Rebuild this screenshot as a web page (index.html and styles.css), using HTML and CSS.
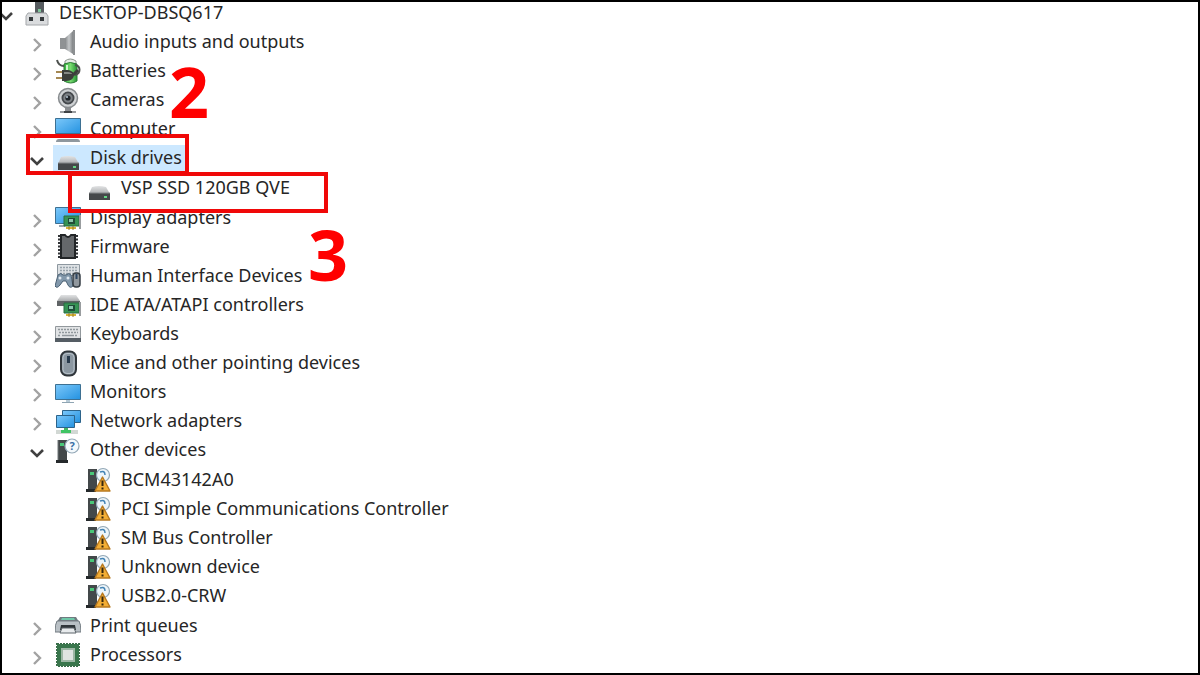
FILE: index.html
```html
<!DOCTYPE html>
<html lang="en">
<head>
  <meta charset="UTF-8" />
  <meta name="viewport" content="width=device-width, initial-scale=1.0"/>
  <title>Device Manager</title>
  <link rel="stylesheet" href="styles.css">
</head>
<body>
  <!-- Icon set -->
  <svg class="sprite" aria-hidden="true">
    <defs>
      <linearGradient id="blue" x1="0" y1="0" x2="1" y2="1">
        <stop offset="0" stop-color="#7cc8fa"/><stop offset="1" stop-color="#2492e0"/>
      </linearGradient>
      <linearGradient id="metal" x1="0" y1="0" x2="1" y2="0">
        <stop offset="0" stop-color="#85888a"/><stop offset=".5" stop-color="#c4c7c9"/><stop offset="1" stop-color="#808385"/>
      </linearGradient>
      <linearGradient id="lid" x1="0" y1="0" x2="0" y2="1">
        <stop offset="0" stop-color="#e2e3e4"/><stop offset="1" stop-color="#a9abad"/>
      </linearGradient>
      <linearGradient id="green" x1="0" y1="0" x2="1" y2="0">
        <stop offset="0" stop-color="#2fae3c"/><stop offset=".5" stop-color="#79dc70"/><stop offset="1" stop-color="#249435"/>
      </linearGradient>
    </defs>

    <symbol id="chevron-right" viewBox="0 0 16 16">
      <path d="M5 2l6 6-6 6" fill="none" stroke="#a2a2a2" stroke-width="2.4"/>
    </symbol>
    <symbol id="chevron-down" viewBox="0 0 16 16">
      <path d="M2 5l6 6 6-6" fill="none" stroke="#404040" stroke-width="2.6"/>
    </symbol>

    <symbol id="root" viewBox="0 0 26 27">
      <path d="M11 0h9v14h-9z" fill="#565b5f"/>
      <path d="M14 9h3v3h-3z" fill="#7fc49a"/>
      <path d="M4 13h18l2 3v9H2v-9z" fill="#dadcde" stroke="#a4a7aa"/>
      <path d="M5 17h4v4H5zM16 17h4v4h-4z" fill="#35393c"/>
    </symbol>

    <symbol id="audio" viewBox="0 0 26 27">
      <path d="M5 9h5v11H5z" fill="#8f9294"/>
      <path d="M10 9l8-7v23l-8-5z" fill="url(#metal)"/>
      <path d="M18 1h2v25h-2z" fill="#8c8f91"/>
    </symbol>

    <symbol id="battery" viewBox="0 0 26 27">
      <path d="M10 3q5-4 11 0v3H10z" fill="#e6ebe6" stroke="#8d958e"/>
      <path d="M9 6q6-3 13 0v17q-6 4-13 0z" fill="url(#green)" stroke="#2c7b35"/>
      <path d="M12 7v8" stroke="#d1f5cc" stroke-width="2"/>
      <path d="M2 2c1 4 4 6 7 6M20 7c6 1 6 8 0 10" fill="none" stroke="#4d514e" stroke-width="2"/>
      <path d="M1 14h7M1 20h7" stroke="#a58853" stroke-width="2"/>
      <path d="M7 12h4c5 0 8 2 8 5s-3 6-8 6H7z" fill="#3c3f3c"/>
      <path d="M9 14h4c2 0 4 1 4 2H9z" fill="#858985"/>
      <path d="M18 17l5-5" stroke="#3c3f3c" stroke-width="3"/>
    </symbol>

    <symbol id="camera" viewBox="0 0 26 27">
      <path d="M10 20h6v4h-6z" fill="#8c8f92"/>
      <path d="M5 25h16" stroke="#9a9da0" stroke-width="2"/>
      <path d="M9 25h8" stroke="#3f4346" stroke-width="2"/>
      <circle cx="13" cy="11" r="9.5" fill="#cfd2d4" stroke="#878b8e" stroke-width="1.5"/>
      <circle cx="13" cy="11" r="5.6" fill="#7d8286" stroke="#44484c" stroke-width="1.8"/>
      <circle cx="13" cy="11" r="2.6" fill="#20252a"/>
      <circle cx="12" cy="10" r="1" fill="#b9cbd8"/>
    </symbol>

    <symbol id="computer" viewBox="0 0 26 27">
      <path d="M.5 2.500h25v15H.5z" fill="url(#blue)" stroke="#3d7092"/>
      <path d="M1 26q0-3 3-3h18q3 0 3 3z" fill="#8f989f"/>
    </symbol>

    <symbol id="monitor" viewBox="0 0 26 27">
      <path d="M.5 5.500h25v15H.5z" fill="url(#blue)" stroke="#3d7092"/>
      <path d="M11 21h4v2h-4z" fill="#b8cbd7"/>
      <path d="M7 23.500h12" stroke="#8fa5b3"/>
    </symbol>

    <symbol id="disk" viewBox="0 0 26 27">
      <path d="M6 12q7-2 14 0l4 7H3z" fill="url(#lid)"/>
      <path d="M3 18h21v7H3z" fill="#45484a"/>
      <path d="M3 18h21" stroke="#85888a"/>
      <path d="M18 21h3v2h-3z" fill="#64d684"/>
    </symbol>

    <symbol id="card" viewBox="0 0 18 15">
      <path d="M1 1h15v10H1z" fill="#369454" stroke="#286c40"/>
      <path d="M5 3h7v6H5z" fill="#1f4d38"/>
      <path d="M6 4h4v3H6z" fill="#8cc6ae"/>
      <path d="M3 12h10v2H3z" fill="#d8b438"/>
      <path d="M6 11v4M10 11v4" stroke="#967a24"/>
      <path d="M17 0v14" stroke="#999d9f" stroke-width="2"/>
    </symbol>

    <symbol id="display" viewBox="0 0 26 27">
      <path d="M.5 2.500h25v16H.5z" fill="url(#blue)" stroke="#3d7092"/>
      <path d="M4 21h6" stroke="#9aa6ae" stroke-width="2"/>
      <use href="#card" x="8" y="10" width="18" height="15"/>
    </symbol>

    <symbol id="firmware" viewBox="0 0 26 27">
      <path d="M5 1v24M21 1v24" stroke="#303336" stroke-width="4" stroke-dasharray="2 1.500"/>
      <path d="M6 1h4q3 4 6 0h4v23H6z" fill="#65686b" stroke="#222527" stroke-width="2"/>
    </symbol>

    <symbol id="hid" viewBox="0 0 26 27">
      <path d="M2.500 1.500h22v11h-22z" fill="#dde1e4" stroke="#8d979f"/>
      <path d="M5 4.500h18M5 7.500h18M5 10.500h18" stroke="#98a3ab" stroke-width="1.500" stroke-dasharray="2 1"/>
      <path d="M3 12q3-3 5 0h3q3-3 5 0l2 11q-3 3-5-1l-2-4H8l-3 4q-3 4-5 1z" fill="#8298ab" stroke="#4a6073"/>
      <circle cx="5" cy="15" r="1.500" fill="#dfe8ef"/>
      <circle cx="13" cy="15" r="1.500" fill="#dfe8ef"/>
      <rect x="18" y="10" width="7" height="14" rx="3" fill="#91989e" stroke="#363e45" stroke-width="1.500"/>
      <path d="M21.500 11v5" stroke="#2e4864" stroke-width="2"/>
    </symbol>

    <symbol id="ide" viewBox="0 0 26 27">
      <path d="M6 3h15l4 6H2z" fill="url(#lid)"/>
      <path d="M2 9h23v5H2z" fill="#5f6365"/>
      <use href="#card" x="8" y="10" width="18" height="15"/>
    </symbol>

    <symbol id="keyboard" viewBox="0 0 26 27">
      <path d="M.5 5.500h25v13H.5z" fill="#e1e3e5" stroke="#92989c"/>
      <path d="M3 8.500h20M4 11.500h19M3 14.500h3M20 14.500h3" stroke="#90979c" stroke-width="1.500" stroke-dasharray="2 1"/>
      <path d="M7 14.500h12" stroke="#90979c" stroke-width="1.500"/>
      <path d="M0 17h26v4H0z" fill="#555d64"/>
    </symbol>

    <symbol id="mouse" viewBox="0 0 26 27">
      <rect x="6" y="1.500" width="15" height="24" rx="6" fill="#8b97a1" stroke="#30363b" stroke-width="2"/>
      <rect x="8" y="3.500" width="11" height="20" rx="4" fill="none" stroke="#b6c0c8"/>
      <path d="M13.500 6v7" stroke="#27394b" stroke-width="3"/>
    </symbol>

    <symbol id="network" viewBox="0 0 26 27">
      <path d="M7.500 2.500h18v12h-18z" fill="url(#blue)" stroke="#2c638a"/>
      <path d="M1.500 7.500h18v12h-18z" fill="url(#blue)" stroke="#2c638a"/>
      <path d="M9 20h4v2h-4z" fill="#45b665"/>
      <path d="M1 22h22v4H1z" fill="#d2d8d4"/>
      <path d="M6 22h10v3H6z" fill="#3fc464"/>
    </symbol>

    <symbol id="other" viewBox="0 0 26 27">
      <path d="M3 3h9v20H3z" fill="#43484a"/>
      <path d="M1 23h12v3H1z" fill="#25292b"/>
      <path d="M3 3v20" stroke="#707678"/>
      <path d="M5 6h4v3H5z" fill="#49c779"/>
      <circle cx="17" cy="9" r="7" fill="#f4f9fc" stroke="#93a8b7" stroke-width="1.200"/>
    </symbol>

    <symbol id="warning" viewBox="0 0 26 27">
      <path d="M2 2h9v20H2z" fill="#43484a"/>
      <path d="M0 22h10v3H0z" fill="#25292b"/>
      <path d="M4 5h4v3H4z" fill="#49c779"/>
      <circle cx="17" cy="8" r="6.500" fill="#edf5fa" stroke="#93a8b7" stroke-width="1.200"/>
      <path d="M14 5q5-2 5 3" fill="none" stroke="#4484b5" stroke-width="1.500"/>
      <path d="M16.500 10l7.500 14H9z" fill="#f3ae35" stroke="#b87920" stroke-linejoin="round" stroke-width="1.400"/>
      <path d="M16.500 13.500v5.500M16.500 20.500v2" stroke="#35250c" stroke-width="2"/>
    </symbol>

    <symbol id="printer" viewBox="0 0 26 27">
      <path d="M5 4h16l3 5H2z" fill="#707a80"/>
      <path d="M7 5h12l1 2H6z" fill="#6fc8a8"/>
      <path d="M2 8h22q2 3 2 11H0Q0 11 2 8z" fill="#b9c0c5" stroke="#727b81"/>
      <path d="M6 12h14l1 5H5z" fill="#30363a"/>
      <path d="M7 15h12l2 5H5z" fill="#e8ebed" stroke="#5d656a"/>
    </symbol>

    <symbol id="processor" viewBox="0 0 26 27">
      <rect x="2" y="2" width="22" height="22" fill="none" stroke="#3b6d4a" stroke-width="2" stroke-dasharray="2 1"/>
      <path d="M2 2h22v22H2z" fill="#39764c"/>
      <path d="M7 7h12v12H7z" fill="#dfe4e1" stroke="#9db7a5" stroke-width="2"/>
    </symbol>
  </svg>

  <main class="window">
    <ul class="tree" id="tree"></ul>
  </main>

  <script>
    const devices = [
      { name: "DESKTOP-DBSQ617", icon: "root", children: [
        { name: "Audio inputs and outputs", icon: "audio", closed: true },
        { name: "Batteries", icon: "battery", closed: true },
        { name: "Cameras", icon: "camera", closed: true },
        { name: "Computer", icon: "computer", closed: true },
        { name: "Disk drives", icon: "disk", selected: true, step: 2, children: [
          { name: "VSP SSD 120GB QVE", icon: "disk", step: 3 }
        ] },
        { name: "Display adapters", icon: "display", closed: true },
        { name: "Firmware", icon: "firmware", closed: true },
        { name: "Human Interface Devices", icon: "hid", closed: true },
        { name: "IDE ATA/ATAPI controllers", icon: "ide", closed: true },
        { name: "Keyboards", icon: "keyboard", closed: true },
        { name: "Mice and other pointing devices", icon: "mouse", closed: true },
        { name: "Monitors", icon: "monitor", closed: true },
        { name: "Network adapters", icon: "network", closed: true },
        { name: "Other devices", icon: "other", mark: "?", children: [
          { name: "BCM43142A0", icon: "warning" },
          { name: "PCI Simple Communications Controller", icon: "warning" },
          { name: "SM Bus Controller", icon: "warning" },
          { name: "Unknown device", icon: "warning" },
          { name: "USB2.0-CRW", icon: "warning" }
        ] },
        { name: "Print queues", icon: "printer", closed: true },
        { name: "Processors", icon: "processor", closed: true }
      ] }
    ];

    function renderToggle(device) {
      if (!device.children && !device.closed) {
        return `<span class="toggle"></span>`;
      }
      const chevron = device.children ? "chevron-down" : "chevron-right";
      return `<button class="toggle" type="button" aria-label="${device.name}" aria-expanded="${!device.closed}">
        <svg><use href="#${chevron}"/></svg>
      </button>`;
    }

    function renderDevice(device) {
      const mark = device.mark ? `<text x="17" y="13" class="mark">${device.mark}</text>` : "";
      const step = device.step
        ? `<span class="frame frame-${device.step}"></span><b class="step step-${device.step}">${device.step}</b>`
        : "";
      const children = device.children
        ? `<ul class="branch">${device.children.map(renderDevice).join("")}</ul>`
        : "";
      return `<li>
        <div class="row">
          ${renderToggle(device)}
          <span class="node${device.selected ? " selected" : ""}">
            <svg class="icon"><use href="#${device.icon}"/>${mark}</svg>
            <span class="name">${device.name}</span>
          </span>
          ${step}
        </div>
        ${children}
      </li>`;
    }

    document.getElementById("tree").innerHTML = devices.map(renderDevice).join("");
  </script>
</body>
</html>
```
FILE: styles.css
```css
* {
  box-sizing: border-box;
}

body {
  margin: 0;
  font-family: "Noto Sans", "Open Sans", sans-serif;
  font-size: 18px;
  color: #262626;
  background-color: #fff;
}

.window {
  min-height: 100vh;
  border: 2px solid #000;
  overflow: hidden;
}

.sprite {
  position: absolute;
  width: 0;
  height: 0;
}

/* Tree */
.tree,
.branch {
  margin: 0;
  padding: 0;
  list-style: none;
}

.tree {
  margin: -3px 0 0 -4px;
}

.branch {
  padding-left: 31px;
}

.branch .branch {
  padding-top: 1px;
  padding-bottom: 1px;
}

.row {
  position: relative;
  display: flex;
  align-items: center;
  height: 29px;
  white-space: nowrap;
}

.toggle {
  width: 16px;
  height: 16px;
  margin: 4px 8px 0 0;
  padding: 0;
  border: none;
  background: none;
  cursor: pointer;
}

.toggle svg {
  display: block;
  width: 16px;
  height: 16px;
}

.node {
  display: flex;
  align-items: center;
  gap: 9px;
  height: 28px;
  padding: 0 6px 0 2px;
}

.selected {
  background-color: #cce8ff;
}

.icon {
  width: 26px;
  height: 27px;
}

.name {
  padding-bottom: 3px;
  line-height: 24px;
}

.mark {
  font-size: 11px;
  font-weight: bold;
  text-anchor: middle;
  fill: #3a6fa5;
}

/* Step annotations */
.frame {
  position: absolute;
  z-index: 1;
  height: 41px;
  border: 4px solid #f00808;
}

.frame-2 {
  top: -10px;
  left: -3px;
  width: 163px;
}

.frame-3 {
  top: -2px;
  left: 8px;
  width: 260px;
}

.step {
  position: absolute;
  z-index: 1;
  font-family: "Open Sans", sans-serif;
  font-size: 70px;
  line-height: 70px;
  color: #f00;
}

.step-2 {
  top: -88px;
  left: 140px;
}

.step-3 {
  top: 45px;
  left: 248px;
}
```
